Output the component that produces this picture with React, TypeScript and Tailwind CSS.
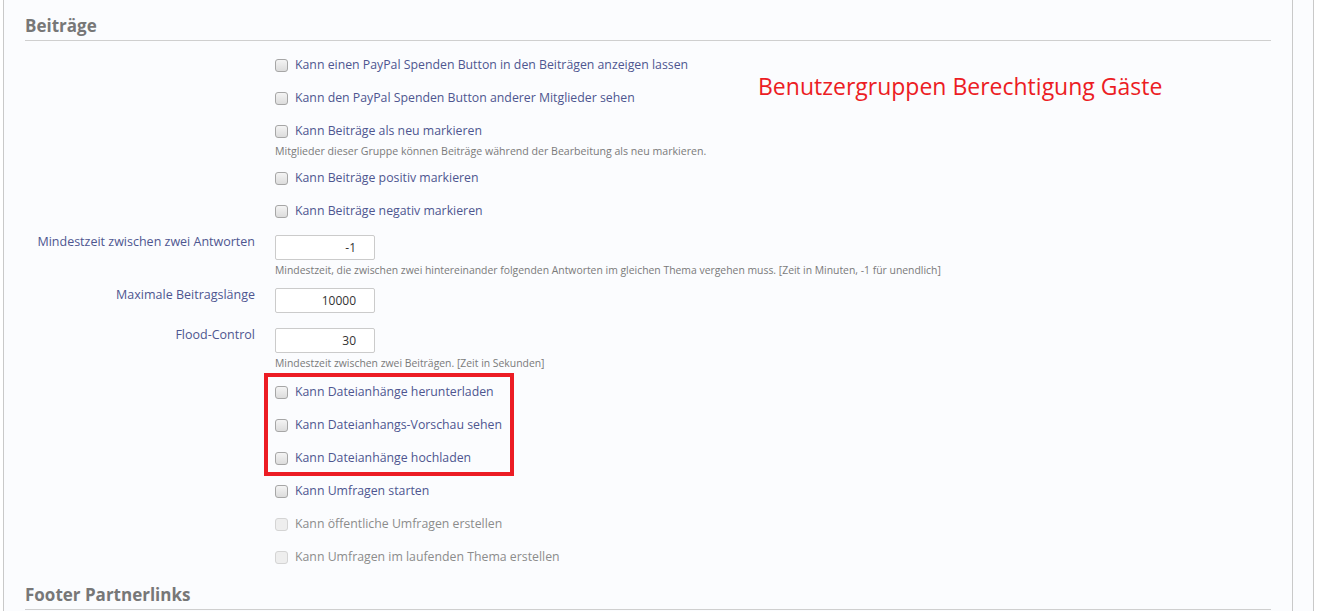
import React from 'react';

const font = { fontFamily: '"Open Sans", "Liberation Sans", sans-serif' };

function Box({ disabled }: { disabled?: boolean }) {
  return (
    <span
      className={`inline-block w-[13px] h-[13px] rounded-[3px] border shrink-0 ${
        disabled
          ? 'border-[#d4d4d4] bg-[#eeeeee]'
          : 'border-[#a6a6a6] bg-gradient-to-b from-[#f4f4f4] to-[#dcdcdc]'
      }`}
    />
  );
}

function CheckRow({ text, desc, disabled }: { text: string; desc?: string; disabled?: boolean }) {
  return (
    <div className={`flex ${desc ? 'pt-[8px] pb-[4px]' : 'py-[8px]'}`}>
      <div className="w-[230px] shrink-0" />
      <div className="ml-[20px]">
        <label className="flex items-center h-[17px] gap-[7px]">
          <Box disabled={disabled} />
          <span className={`text-[12.3px] ${disabled ? 'text-[#8c8c8c]' : 'text-[#4e5690]'}`}>{text}</span>
        </label>
        {desc && <p className="mt-[5px] leading-[13px] text-[10.6px] text-[#7a7a7a]">{desc}</p>}
      </div>
    </div>
  );
}

function InputRow({ label, value, desc, pt, pb }: { label: string; value: string; desc?: string; pt: string; pb: string }) {
  return (
    <div className={`flex items-start ${pt} ${pb}`}>
      <div className="w-[230px] shrink-0 text-right text-[12.5px] leading-[17px] text-[#4e5690]">{label}</div>
      <div className="ml-[20px] pt-[2px]">
        <div className="w-[100px] h-[25px] border border-[#cbcbcb] rounded-[2px] bg-white flex items-center justify-end pr-[18px] text-[12px] text-[#333]">
          {value}
        </div>
        {desc && <p className="mt-[4px] leading-[13px] text-[10.4px] text-[#7a7a7a]">{desc}</p>}
      </div>
    </div>
  );
}

export default function App() {
  return (
    <div className="w-[1317px] h-[611px] overflow-hidden bg-white flex" style={font}>
      <div className="w-[3px] shrink-0" />
      <div className="relative w-[1290px] shrink-0 border-x border-[#c9c9c9] bg-[#fbfcfe] pl-[21px] pr-[21px]">
        <h2 className="pt-[16px] pb-[4px] leading-[20px] text-[17px] font-bold text-[#777] border-b border-[#cfcfcf]">
          Beiträge
        </h2>
        <div className="pt-[8px]">
          <CheckRow text="Kann einen PayPal Spenden Button in den Beiträgen anzeigen lassen" />
          <CheckRow text="Kann den PayPal Spenden Button anderer Mitglieder sehen" />
          <CheckRow
            text="Kann Beiträge als neu markieren"
            desc="Mitglieder dieser Gruppe können Beiträge während der Bearbeitung als neu markieren."
          />
          <CheckRow text="Kann Beiträge positiv markieren" />
          <CheckRow text="Kann Beiträge negativ markieren" />
          <InputRow
            label="Mindestzeit zwischen zwei Antworten"
            value="-1"
            desc="Mindestzeit, die zwischen zwei hintereinander folgenden Antworten im gleichen Thema vergehen muss. [Zeit in Minuten, -1 für unendlich]"
            pt="pt-[5px]"
            pb="pb-[3px]"
          />
          <InputRow label="Maximale Beitragslänge" value="10000" pt="pt-[6px]" pb="pb-[7px]" />
          <InputRow
            label="Flood-Control"
            value="30"
            desc="Mindestzeit zwischen zwei Beiträgen. [Zeit in Sekunden]"
            pt="pt-[6px]"
            pb="pb-[6px]"
          />
          <CheckRow text="Kann Dateianhänge herunterladen" />
          <CheckRow text="Kann Dateianhangs-Vorschau sehen" />
          <CheckRow text="Kann Dateianhänge hochladen" />
          <CheckRow text="Kann Umfragen starten" />
          <CheckRow text="Kann öffentliche Umfragen erstellen" disabled />
          <CheckRow text="Kann Umfragen im laufenden Thema erstellen" disabled />
        </div>
        <h2 className="mt-[11px] pb-[4px] leading-[20px] text-[17px] font-bold text-[#777] border-b border-[#cfcfcf]">
          Footer Partnerlinks
        </h2>

        {/* Markierungen */}
        <div className="absolute left-[260px] top-[373px] w-[250px] h-[103px] border-[4px] border-[#ec1c24]" />
        <div className="absolute left-[754px] top-[70px] text-[23px] leading-[32px] text-[#ec1c24]">
          Benutzergruppen Berechtigung Gäste
        </div>
      </div>
      <div className="w-[21px] shrink-0 border-r border-[#c9c9c9] bg-[#fbfcfe]" />
    </div>
  );
}
